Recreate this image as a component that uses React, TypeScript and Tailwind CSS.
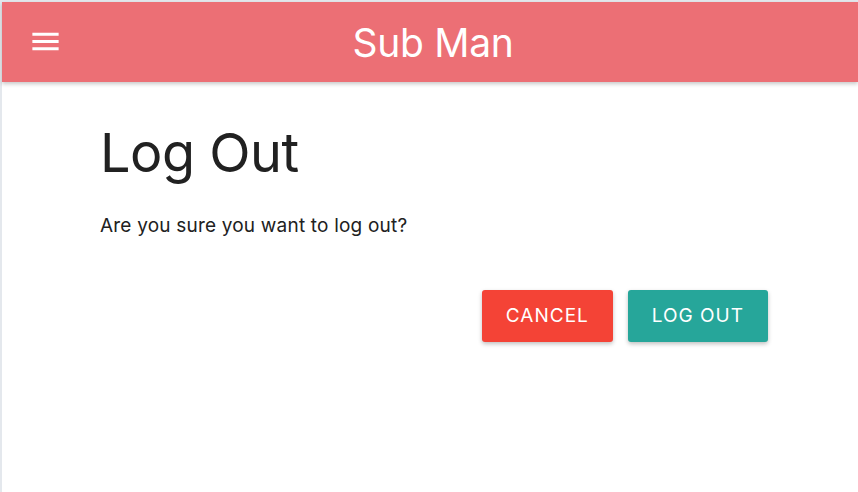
import React from 'react';

const MenuIcon: React.FC = () => (
    <svg width="35" height="35" viewBox="0 0 24 24" fill="white">
        <path d="M3 18h18v-2H3v2zm0-5h18v-2H3v2zm0-7v2h18V6H3z" />
    </svg>
);

export default function App() {
    return (
        <div className="min-h-[492px] bg-white border-l-2 border-t-2 border-[#e4e8ed] font-['Inter','Liberation_Sans',sans-serif]">
            {/* Nav */}
            <header className="relative h-20 bg-[#ec6f75] flex items-center justify-center pl-[6px] shadow-[0_2px_4px_rgba(0,0,0,0.22)]">
                <button className="absolute left-[26px] top-[22px] p-0">
                    <MenuIcon />
                </button>
                <h1 className="text-[39px] leading-none text-white tracking-[-0.3px]">Sub Man</h1>
            </header>

            {/* Content */}
            <main className="pl-[98px] pr-[90px] pt-[39px]">
                <h2 className="text-[54px] leading-[1.2] text-[#212121] tracking-[-0.5px]">Log Out</h2>
                <p className="mt-[26px] text-[19px] leading-[1.5] text-[#212121] tracking-[0.2px]">Are you sure you want to log out?</p>
                <div className="mt-[50px] flex justify-end gap-[15px]">
                    <button className="h-[52px] px-[24px] rounded-[3px] bg-[#f44336] text-white text-[19px] tracking-[1px] uppercase shadow-[0_2px_4px_rgba(0,0,0,0.25)]">
                        Cancel
                    </button>
                    <button className="h-[52px] px-[24px] rounded-[3px] bg-[#26a69a] text-white text-[19px] tracking-[1px] uppercase shadow-[0_2px_4px_rgba(0,0,0,0.25)]">
                        Log Out
                    </button>
                </div>
            </main>
        </div>
    );
}
